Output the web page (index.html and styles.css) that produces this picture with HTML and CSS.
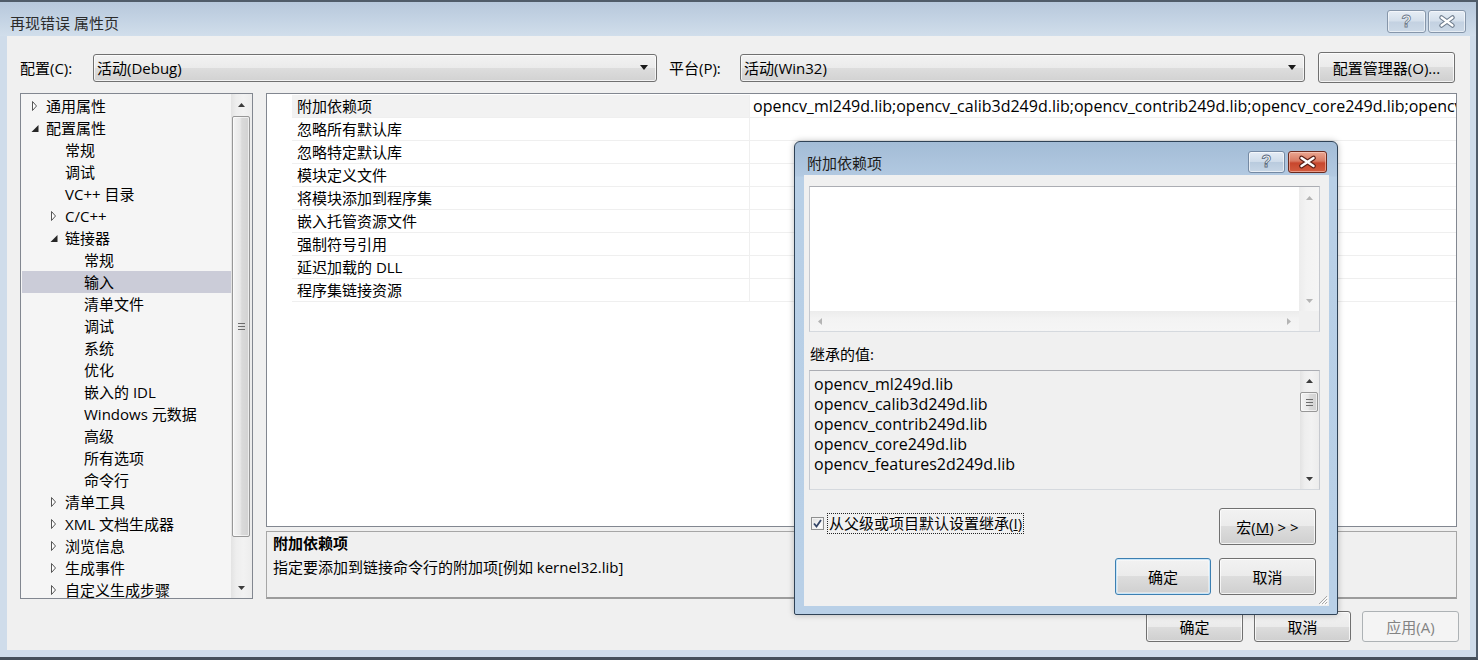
FILE: index.html
```html
<!DOCTYPE html>
<html lang="zh-CN">
<head>
<meta charset="utf-8">
<title>再现错误 属性页</title>
<link rel="stylesheet" href="styles.css">
</head>
<body>
<div class="window">
  <div class="titlebar">
    <div class="title">再现错误 属性页</div>
    <div class="caps">
      <div class="cap cap-help"><span class="qmark">?</span></div>
      <div class="cap cap-close"><svg width="38" height="23" viewBox="0 0 38 23"><path d="M13.5 7.5 L24.5 15.5 M24.5 7.5 L13.5 15.5" stroke="#6f7d8e" stroke-width="4.6" stroke-linecap="round"/><path d="M13.5 7.5 L24.5 15.5 M24.5 7.5 L13.5 15.5" stroke="#ffffff" stroke-width="2.2" stroke-linecap="round"/></svg></div>
    </div>
  </div>

  <div class="client">
    <div class="configrow">
      <span class="lbl lbl-conf">配置(C):</span>
      <div class="combo combo-conf"><span class="combo-text">活动(Debug)</span><svg class="combo-arrow" width="8" height="5" viewBox="0 0 8 5"><path d="M0 0 H8 L4 5 Z" fill="#1a1a1a"/></svg></div>
      <span class="lbl lbl-plat">平台(P):</span>
      <div class="combo combo-plat"><span class="combo-text">活动(Win32)</span><svg class="combo-arrow" width="8" height="5" viewBox="0 0 8 5"><path d="M0 0 H8 L4 5 Z" fill="#1a1a1a"/></svg></div>
      <div class="btn btn-mgr">配置管理器(O)...</div>
    </div>

    <div class="main">
      <div class="tree">
        <div class="tree-items">
          <div class="ti l0"><svg class="tw" width="15" height="12" viewBox="0 0 15 12"><path d="M1.5 1.5 L5.5 6 L1.5 10.5 Z" fill="#ffffff" stroke="#555555"/></svg>通用属性</div>
          <div class="ti l0"><svg class="tw" width="15" height="12" viewBox="0 0 15 12"><path d="M7.5 3 V10 H0.5 Z" fill="#262626"/></svg>配置属性</div>
          <div class="ti l1"><span class="tw"></span>常规</div>
          <div class="ti l1"><span class="tw"></span>调试</div>
          <div class="ti l1"><span class="tw"></span>VC++ 目录</div>
          <div class="ti l1"><svg class="tw" width="15" height="12" viewBox="0 0 15 12"><path d="M1.5 1.5 L5.5 6 L1.5 10.5 Z" fill="#ffffff" stroke="#555555"/></svg>C/C++</div>
          <div class="ti l1"><svg class="tw" width="15" height="12" viewBox="0 0 15 12"><path d="M7.5 3 V10 H0.5 Z" fill="#262626"/></svg>链接器</div>
          <div class="ti l2"><span class="tw"></span>常规</div>
          <div class="ti l2 sel"><span class="tw"></span>输入</div>
          <div class="ti l2"><span class="tw"></span>清单文件</div>
          <div class="ti l2"><span class="tw"></span>调试</div>
          <div class="ti l2"><span class="tw"></span>系统</div>
          <div class="ti l2"><span class="tw"></span>优化</div>
          <div class="ti l2"><span class="tw"></span>嵌入的 IDL</div>
          <div class="ti l2"><span class="tw"></span>Windows 元数据</div>
          <div class="ti l2"><span class="tw"></span>高级</div>
          <div class="ti l2"><span class="tw"></span>所有选项</div>
          <div class="ti l2"><span class="tw"></span>命令行</div>
          <div class="ti l1"><svg class="tw" width="15" height="12" viewBox="0 0 15 12"><path d="M1.5 1.5 L5.5 6 L1.5 10.5 Z" fill="#ffffff" stroke="#555555"/></svg>清单工具</div>
          <div class="ti l1"><svg class="tw" width="15" height="12" viewBox="0 0 15 12"><path d="M1.5 1.5 L5.5 6 L1.5 10.5 Z" fill="#ffffff" stroke="#555555"/></svg>XML 文档生成器</div>
          <div class="ti l1"><svg class="tw" width="15" height="12" viewBox="0 0 15 12"><path d="M1.5 1.5 L5.5 6 L1.5 10.5 Z" fill="#ffffff" stroke="#555555"/></svg>浏览信息</div>
          <div class="ti l1"><svg class="tw" width="15" height="12" viewBox="0 0 15 12"><path d="M1.5 1.5 L5.5 6 L1.5 10.5 Z" fill="#ffffff" stroke="#555555"/></svg>生成事件</div>
          <div class="ti l1"><svg class="tw" width="15" height="12" viewBox="0 0 15 12"><path d="M1.5 1.5 L5.5 6 L1.5 10.5 Z" fill="#ffffff" stroke="#555555"/></svg>自定义生成步骤</div>
        </div>
        <div class="vscroll tree-scroll">
          <div class="sb-btn"><svg width="7" height="4" viewBox="0 0 7 4"><path d="M0 4 L3.5 0 L7 4 Z" fill="#3c3c3c"/></svg></div>
          <div class="thumb tree-thumb"><svg width="7" height="7" viewBox="0 0 7 7"><path d="M0 0.5 H7 M0 3.5 H7 M0 6.5 H7" stroke="#6c6c6c"/></svg></div>
          <div class="sb-btn sb-bottom"><svg width="7" height="4" viewBox="0 0 7 4"><path d="M0 0 L7 0 L3.5 4 Z" fill="#3c3c3c"/></svg></div>
        </div>
      </div>

      <div class="rightcol">
        <div class="grid">
          <div class="prow first"><div class="pg"></div><div class="pn">附加依赖项</div><div class="pv"><span class="lat">opencv_ml249d.lib;opencv_calib3d249d.lib;opencv_contrib249d.lib;opencv_core249d.lib;opencv_features2d249d.lib;%(AdditionalDependencies)</span></div></div>
          <div class="prow"><div class="pg"></div><div class="pn">忽略所有默认库</div><div class="pv"></div></div>
          <div class="prow"><div class="pg"></div><div class="pn">忽略特定默认库</div><div class="pv"></div></div>
          <div class="prow"><div class="pg"></div><div class="pn">模块定义文件</div><div class="pv"></div></div>
          <div class="prow"><div class="pg"></div><div class="pn">将模块添加到程序集</div><div class="pv"></div></div>
          <div class="prow"><div class="pg"></div><div class="pn">嵌入托管资源文件</div><div class="pv"></div></div>
          <div class="prow"><div class="pg"></div><div class="pn">强制符号引用</div><div class="pv"></div></div>
          <div class="prow"><div class="pg"></div><div class="pn">延迟加载的 DLL</div><div class="pv"></div></div>
          <div class="prow"><div class="pg"></div><div class="pn">程序集链接资源</div><div class="pv"></div></div>
        </div>
        <div class="desc">
          <div class="desc-title">附加依赖项</div>
          <div class="desc-text">指定要添加到链接命令行的附加项[例如 kernel32.lib]</div>
        </div>
      </div>
    </div>

    <div class="bottombar">
      <div class="btn btn-main">确定</div>
      <div class="btn btn-main">取消</div>
      <div class="btn btn-main disabled">应用(A)</div>
    </div>
  </div>

  <div class="dialog">
    <div class="dlg-title">
      <div class="dlg-title-text">附加依赖项</div>
      <div class="dlg-caps">
        <div class="dcap dcap-help"><span class="qmark dq">?</span></div>
        <div class="dcap dcap-close"><svg width="39" height="22" viewBox="0 0 39 22"><path d="M13.5 7 L25.5 15 M25.5 7 L13.5 15" stroke="#5a1f16" stroke-width="4.8" stroke-linecap="round"/><path d="M13.5 7 L25.5 15 M25.5 7 L13.5 15" stroke="#ffffff" stroke-width="2.4" stroke-linecap="round"/></svg></div>
      </div>
    </div>
    <div class="dlg-client">
      <div class="editbox">
        <div class="edit-area"></div>
        <div class="vscroll edit-vs">
          <div class="sb-btn"><svg width="7" height="4" viewBox="0 0 7 4"><path d="M0 4 L3.5 0 L7 4 Z" fill="#b4b4b4"/></svg></div>
          <div class="sb-btn sb-bottom"><svg width="7" height="4" viewBox="0 0 7 4"><path d="M0 0 L7 0 L3.5 4 Z" fill="#b4b4b4"/></svg></div>
        </div>
        <div class="hscroll">
          <div class="hsb-btn"><svg width="4" height="7" viewBox="0 0 4 7"><path d="M4 0 L0 3.5 L4 7 Z" fill="#b4b4b4"/></svg></div>
          <div class="hsb-btn"><svg width="4" height="7" viewBox="0 0 4 7"><path d="M0 0 L4 3.5 L0 7 Z" fill="#b4b4b4"/></svg></div>
        </div>
        <div class="corner"></div>
      </div>

      <div class="inh-label">继承的值:</div>

      <div class="listbox">
        <div class="list-items">
          <div class="li lat">opencv_ml249d.lib</div>
          <div class="li lat">opencv_calib3d249d.lib</div>
          <div class="li lat">opencv_contrib249d.lib</div>
          <div class="li lat">opencv_core249d.lib</div>
          <div class="li lat">opencv_features2d249d.lib</div>
        </div>
        <div class="vscroll list-vs">
          <div class="sb-btn"><svg width="7" height="4" viewBox="0 0 7 4"><path d="M0 4 L3.5 0 L7 4 Z" fill="#3c3c3c"/></svg></div>
          <div class="thumb list-thumb"><svg width="7" height="7" viewBox="0 0 7 7"><path d="M0 0.5 H7 M0 3.5 H7 M0 6.5 H7" stroke="#6c6c6c"/></svg></div>
          <div class="sb-btn sb-bottom"><svg width="7" height="4" viewBox="0 0 7 4"><path d="M0 0 L7 0 L3.5 4 Z" fill="#3c3c3c"/></svg></div>
        </div>
      </div>

      <div class="dlg-row1">
        <div class="chk-wrap">
          <div class="checkbox"><svg width="11" height="11" viewBox="0 0 11 11"><path d="M2 5.5 L4.5 8.5 L9 2" fill="none" stroke="#334466" stroke-width="1.8"/></svg></div>
          <span class="chk-label">从父级或项目默认设置继承(<u>I</u>)</span>
        </div>
        <div class="btn dbtn">宏(<u>M</u>) &gt; &gt;</div>
      </div>
      <div class="dlg-row2">
        <div class="btn dbtn default">确定</div>
        <div class="btn dbtn">取消</div>
      </div>
      <svg class="grip" width="11" height="11" viewBox="0 0 11 11"><path d="M10 2 L2 10 M10 5 L5 10 M10 8 L8 10" stroke="#a8a8a8" stroke-width="1"/><path d="M11 3 L3 11 M11 6 L6 11 M11 9 L9 11" stroke="#ffffff" stroke-width="1"/></svg>
    </div>
  </div>
</div>
</body>
</html>
```

FILE: styles.css
```css
* { box-sizing: border-box; margin: 0; padding: 0; }
html, body { width: 1478px; height: 660px; overflow: hidden; }
body {
  font-family: "Open Sans", "Noto Sans CJK SC", sans-serif;
  font-size: 15px;
  color: #000;
  background: #ffffff;
}
.lat { font-size: 16px; }

.window {
  position: relative;
  width: 1478px;
  height: 660px;
  display: flex;
  flex-direction: column;
  background: #cfdcea;
  border-top: 2px solid #505c69;
  border-right: 2px solid #505c69;
  border-bottom: 3px solid #454f5a;
}

/* ---------- title bar ---------- */
.titlebar {
  height: 34px;
  flex: none;
  display: flex;
  align-items: flex-start;
  background: linear-gradient(#b7c8db, #c6d5e5 60%, #d1deeb);
}
.title {
  margin: 11px 0 0 10px;
  line-height: 20px;
  color: #2b2b2b;
}
.caps { margin: 8px 10px 0 auto; display: flex; gap: 2px; }
.cap {
  height: 23px;
  border: 1px solid #8696aa;
  border-radius: 3px;
  background: linear-gradient(#e6edf5, #d4dfeb 48%, #c3d1e1 52%, #ccd9e7);
  box-shadow: inset 0 0 0 1px rgba(255,255,255,0.55);
  display: flex;
  align-items: center;
  justify-content: center;
}
.cap-help { width: 39px; }
.cap-close { width: 38px; }
.cap-close svg { display: block; margin: -1px; }
.qmark {
  font-family: "Liberation Sans", sans-serif;
  font-weight: bold;
  font-size: 16px;
  line-height: 16px;
  color: #ffffff;
  -webkit-text-stroke: 0.9px #6f7d8e;
}

/* ---------- client ---------- */
.client {
  height: 614px;
  flex: none;
  margin: 0 6px 0 7px;
  background: #f0f0f0;
  padding: 16px 11px 0 13px;
  display: flex;
  flex-direction: column;
}

.configrow { height: 31px; display: flex; align-items: center; }
.lbl { line-height: 20px; white-space: nowrap; }
.lbl-conf { width: 73px; }
.lbl-plat { width: 71px; margin-left: 12px; }

.combo {
  height: 28px;
  border: 1px solid #707070;
  border-radius: 3px;
  background: linear-gradient(#f2f2f2, #ebebeb 50%, #dddddd 50%, #d2d2d2);
  box-shadow: inset 0 0 0 1px rgba(255,255,255,0.7);
  display: flex;
  align-items: center;
  padding: 0 8px 0 3px;
}
.combo-conf { width: 564px; }
.combo-plat { width: 565px; }
.combo-text { line-height: 20px; white-space: nowrap; }
.combo-arrow { margin-left: auto; display: block; }

.btn {
  border: 1px solid #707070;
  border-radius: 3px;
  background: linear-gradient(#f2f2f2, #ebebeb 50%, #dddddd 50%, #cfcfcf);
  box-shadow: inset 0 0 0 1px rgba(255,255,255,0.75);
  display: flex;
  align-items: center;
  justify-content: center;
  line-height: 20px;
  white-space: nowrap;
}
.btn-mgr { width: 137px; height: 31px; margin-left: 13px; }

/* ---------- main ---------- */
.main { height: 506px; margin-top: 10px; margin-right: 2px; display: flex; gap: 13px; }

.tree {
  width: 233px;
  height: 506px;
  border: 1px solid #828790;
  background: #f5f5f5;
  display: flex;
}
.tree-items { width: 210px; padding-top: 1px; overflow: hidden; }
.ti {
  height: 22px;
  line-height: 22px;
  margin-left: 1px;
  display: flex;
  align-items: center;
  white-space: nowrap;
}
.ti.sel { background: #cbccd8; }
.l0 { padding-left: 9px; }
.l1 { padding-left: 28px; }
.l2 { padding-left: 47px; }
.tw { width: 15px; flex: none; display: block; }

.vscroll {
  display: flex;
  flex-direction: column;
  background: linear-gradient(to right, #e3e3e3, #eeeeee 25%, #f2f2f2 60%, #ececec);
}
.tree-scroll { width: 21px; }
.sb-btn {
  height: 21px;
  flex: none;
  display: flex;
  align-items: center;
  justify-content: center;
}
.sb-btn svg { display: block; }
.sb-bottom { margin-top: auto; }
.thumb {
  flex: none;
  margin: 1px 2px 0 1px;
  border: 1px solid #979797;
  border-radius: 2px;
  background: linear-gradient(to right, #f4f4f4, #e8e8e8 45%, #dadada 55%, #d2d2d2);
  box-shadow: inset 0 0 0 1px rgba(255,255,255,0.6);
  display: flex;
  align-items: center;
  justify-content: center;
}
.thumb svg { display: block; }
.tree-thumb { height: 421px; }

.rightcol { width: 1191px; display: flex; flex-direction: column; }
.grid {
  height: 434px;
  border: 1px solid #828790;
  background: #ffffff;
  padding-top: 1px;
  overflow: hidden;
}
.prow { height: 23px; display: flex; line-height: 22px; }
.pg { width: 25px; flex: none; }
.pn {
  width: 458px;
  flex: none;
  padding-left: 5px;
  border-bottom: 1px solid #efefef;
  border-right: 1px solid #efefef;
  white-space: nowrap;
}
.prow.first .pn { background: #f2f2f2; }
.pv {
  flex: 1;
  padding-left: 3px;
  border-bottom: 1px solid #efefef;
  white-space: nowrap;
  overflow: hidden;
}

.desc {
  height: 68px;
  margin-top: 4px;
  border: 1px solid #a6a6a6;
  border-bottom: 2px solid #9c9c9c;
  background: #f0f0f0;
  padding: 1px 6px 0 6px;
}
.desc-title { font-weight: bold; line-height: 20px; margin-bottom: 3px; }
.desc-text { line-height: 22px; }

.bottombar {
  margin-top: 12px;
  display: flex;
  justify-content: flex-end;
  gap: 11px;
}
.btn-main { width: 97px; height: 31px; }
.btn.disabled {
  border-color: #adb2b5;
  background: #f4f4f4;
  box-shadow: none;
  color: #838383;
}

/* ---------- dialog ---------- */
.dialog {
  position: absolute;
  left: 794px;
  top: 139px;
  width: 544px;
  height: 474px;
  border: 1px solid #2f4256;
  border-radius: 6px 6px 2px 2px;
  background: linear-gradient(#a3bcd6, #b2c9e1 34px, #b8cfe6 35px, #b9d0e7);
  box-shadow: 0 0 6px rgba(0,0,0,0.25);
  display: flex;
  flex-direction: column;
}
.dlg-title { height: 33px; flex: none; display: flex; align-items: flex-start; }
.dlg-title-text { margin: 11px 0 0 12px; line-height: 20px; color: #1b1b1b; }
.dlg-caps { margin: 9px 10px 0 auto; display: flex; gap: 3px; }
.dcap {
  height: 22px;
  border-radius: 3px;
  display: flex;
  align-items: center;
  justify-content: center;
}
.dcap-help {
  width: 37px;
  border: 1px solid #7489a3;
  background: linear-gradient(#e4ecf5, #cfdcea 48%, #b9cbde 52%, #c7d6e6);
  box-shadow: inset 0 0 0 1px rgba(255,255,255,0.6);
}
.dq { -webkit-text-stroke: 0.9px #5d6e82; }
.dcap-close {
  width: 39px;
  border: 1px solid #6b2a1e;
  background: linear-gradient(#eaa792, #d97a62 45%, #c8472d 55%, #d35c3f);
  box-shadow: inset 0 0 0 1px rgba(255,220,210,0.5);
}
.dcap-close svg { display: block; margin: -1px; }

.dlg-client {
  position: relative;
  height: 431px;
  flex: none;
  margin: 0 8px 0 9px;
  background: #f0f0f0;
  padding: 11px 9px 0 5px;
  display: flex;
  flex-direction: column;
}
.editbox {
  height: 146px;
  flex: none;
  border: 1px solid #abadb3;
  border-left-color: #c6c9cf;
  border-right-color: #c6c9cf;
  border-bottom-color: #d5d9de;
  background: #ffffff;
  display: grid;
  grid-template-columns: 1fr 20px;
  grid-template-rows: 1fr 20px;
}
.edit-vs { background: linear-gradient(to right, #ececec, #f3f3f3 40%, #f5f5f5); }
.hscroll {
  display: flex;
  justify-content: space-between;
  align-items: center;
  background: linear-gradient(#ececec, #f3f3f3 40%, #f5f5f5);
}
.hsb-btn { width: 20px; height: 20px; display: flex; align-items: center; justify-content: center; }
.hsb-btn svg { display: block; }
.corner { background: #f0f0f0; }

.inh-label { margin-top: 12px; line-height: 20px; padding-left: 1px; }

.listbox {
  height: 120px;
  flex: none;
  margin-top: 6px;
  border: 1px solid #abadb3;
  border-left-color: #c6c9cf;
  border-right-color: #c6c9cf;
  border-bottom-color: #d5d9de;
  background: #f0f0f0;
  display: flex;
}
.list-items { flex: 1; padding: 3px 0 0 4px; overflow: hidden; }
.li { line-height: 20px; height: 20px; white-space: nowrap; }
.list-vs { width: 19px; }
.list-vs .sb-btn { height: 20px; }
.list-thumb { height: 20px; margin: 1px 1px 0 0; }

.dlg-row1 { margin-top: 18px; display: flex; align-items: flex-start; }
.chk-wrap { display: flex; align-items: center; margin: 5px 0 0 2px; }
.checkbox {
  width: 13px;
  height: 13px;
  border: 1px solid #8e8f8f;
  background: linear-gradient(135deg, #dcdcdc, #f6f6f6 60%, #ffffff);
  box-shadow: inset 0 0 0 1px #f2f2f2;
  display: flex;
  align-items: center;
  justify-content: center;
}
.checkbox svg { display: block; }
.chk-label {
  margin-left: 3px;
  padding: 0 1px;
  line-height: 19px;
  border: 1px dotted #222;
  white-space: nowrap;
}
.dbtn { width: 97px; height: 37px; }
.dlg-row1 .dbtn { margin-left: auto; margin-right: 4px; }
.dlg-row2 { margin-top: 13px; margin-right: 4px; display: flex; justify-content: flex-end; gap: 8px; }
.dbtn.default {
  width: 96px;
  border-color: #3c7fb1;
  box-shadow: inset 0 0 0 1px #c8e6fa, inset 0 0 0 2px rgba(255,255,255,0.4);
}
.grip { position: absolute; right: 1px; bottom: 1px; display: block; }
```
